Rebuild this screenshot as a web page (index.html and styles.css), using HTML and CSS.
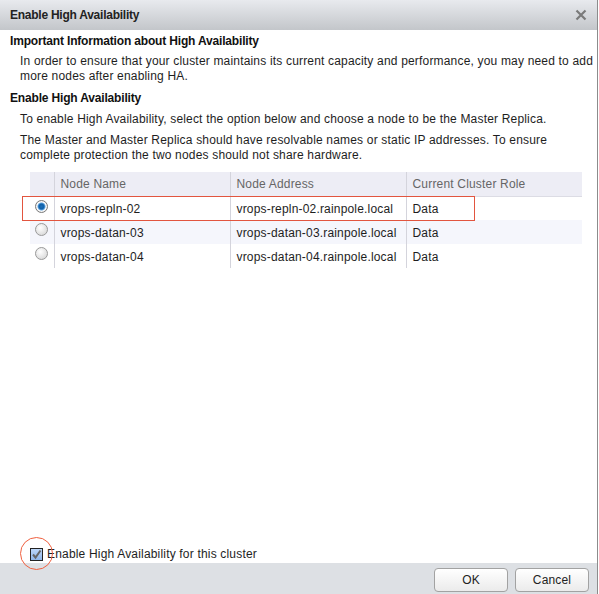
FILE: index.html
```html
<!DOCTYPE html>
<html>
<head>
<meta charset="utf-8">
<link rel="stylesheet" href="styles.css">
</head>
<body>
<div class="dialog">
  <div class="titlebar">
    <span class="title">Enable High Availability</span>
    <svg class="close" width="12" height="12" viewBox="0 0 12 12"><path d="M1.5 1.5 L10.5 10.5 M10.5 1.5 L1.5 10.5" stroke="#7a7a7a" stroke-width="2.2" fill="none"/></svg>
  </div>
  <div class="body">
    <h2 class="heading">Important Information about High Availability</h2>
    <p class="para">In order to ensure that your cluster maintains its current capacity and performance, you may need to add more nodes after enabling HA.</p>
    <h2 class="heading second">Enable High Availability</h2>
    <p class="para">To enable High Availability, select the option below and choose a node to be the Master Replica.</p>
    <p class="para">The Master and Master Replica should have resolvable names or static IP addresses. To ensure complete protection the two nodes should not share hardware.</p>
    <div class="tablewrap">
      <table class="grid">
        <thead>
          <tr><th class="sel"></th><th>Node Name</th><th>Node Address</th><th>Current Cluster Role</th></tr>
        </thead>
        <tbody>
          <tr><td class="sel"><span class="radio on"></span></td><td>vrops-repln-02</td><td>vrops-repln-02.rainpole.local</td><td>Data</td></tr>
          <tr class="alt"><td class="sel"><span class="radio"></span></td><td>vrops-datan-03</td><td>vrops-datan-03.rainpole.local</td><td>Data</td></tr>
          <tr><td class="sel"><span class="radio"></span></td><td>vrops-datan-04</td><td>vrops-datan-04.rainpole.local</td><td>Data</td></tr>
        </tbody>
      </table>
      <div class="highlight-box"></div>
    </div>
    <div class="spacer"></div>
    <label class="check">
      <span class="checkbox"><svg width="11" height="11" viewBox="0 0 11 11"><path d="M2 5.5 L4.5 8.5 L9.5 1.5" stroke="#666" stroke-width="2" fill="none"/></svg></span>
      <span>Enable High Availability for this cluster</span>
      <span class="highlight-circle"></span>
    </label>
  </div>
  <div class="footer">
    <button class="btn">OK</button>
    <button class="btn">Cancel</button>
  </div>
</div>
</body>
</html>
```
FILE: styles.css
```css
html, body {
  margin: 0;
  padding: 0;
  background: #fff;
}
body {
  font-family: "Liberation Sans", Arial, sans-serif;
  font-size: 12px;
  letter-spacing: 0.18px;
  color: #1e1e1e;
}
.dialog {
  width: 598px;
  height: 594px;
  border-right: 1px solid #8c8c8c;
  display: flex;
  flex-direction: column;
  box-sizing: border-box;
}
.titlebar {
  height: 30px;
  flex: none;
  background: linear-gradient(#e8eaee, #c3c6ca);
  display: flex;
  align-items: center;
  justify-content: space-between;
  padding: 0 10px 0 10px;
  box-sizing: border-box;
}
.title {
  font-weight: bold;
  font-size: 12px;
  color: #222;
  letter-spacing: -0.25px;
}
.body {
  flex: 1;
  display: flex;
  flex-direction: column;
  padding: 4px 0 0 10px;
}
.heading {
  font-size: 12px;
  font-weight: bold;
  margin: 0;
  line-height: 15px;
  color: #111;
  letter-spacing: -0.17px;
}
.heading.second {
  margin-top: 7px;
}
.para {
  margin: 5px 0 0 10px;
  line-height: 15px;
  padding-right: 2px;
}
.para + .para {
  margin-top: 6px;
}
.heading.second + .para {
  margin-top: 6px;
}
.tablewrap {
  position: relative;
  margin: 9px 0 0 20px;
  width: 552px;
}
.grid {
  border-collapse: collapse;
  width: 552px;
  table-layout: fixed;
}
.grid th {
  background: #ededf5;
  color: #666;
  font-weight: normal;
  text-align: left;
  height: 24px;
  padding: 1px 6px 0;
  border-left: 1px solid #d4d4dc;
  border-bottom: 1px solid #dcdce4;
  box-sizing: border-box;
}
.grid td {
  height: 24px;
  padding: 1px 6px 0;
  border-left: 1px solid #d4d4dc;
  box-sizing: border-box;
}
.grid th.sel, .grid td.sel {
  width: 24px;
  border-left: none;
  padding: 0;
  text-align: center;
}
.grid th:nth-child(2) { width: 176px; }
.grid th:nth-child(3) { width: 176px; }
.grid tr.alt td { background: #f5f6fc; }
.radio {
  display: inline-block;
  width: 11px;
  height: 11px;
  border-radius: 50%;
  border: 1px solid #9a9a9a;
  background: radial-gradient(circle at 40% 35%, #ffffff, #d0d0d0);
  vertical-align: middle;
  margin-top: -6px;
}
.radio.on {
  border-color: #7a7a7a;
  background: radial-gradient(circle at 50% 50%, #1d6fb8 0, #1060a8 2.5px, #5aa0dc 3.5px, #ffffff 4.5px, #e0e0e0 6px);
}
.highlight-box {
  position: absolute;
  left: -8px;
  top: 24px;
  width: 453px;
  height: 25px;
  border: 1px solid #e2553f;
  box-sizing: border-box;
}
.spacer {
  flex: 1;
}
.check {
  position: relative;
  display: flex;
  align-items: center;
  gap: 4px;
  margin: 0 0 1px 20px;
  height: 16px;
}
.checkbox {
  width: 11px;
  height: 11px;
  border: 1px solid #222;
  background: linear-gradient(#bcd6f8, #8fb6ea);
  display: flex;
  align-items: center;
  justify-content: center;
}
.highlight-circle {
  position: absolute;
  left: -10px;
  top: -9px;
  width: 31px;
  height: 31px;
  border: 1px solid #f0603f;
  border-radius: 50%;
}
.footer {
  height: 31px;
  flex: none;
  background: #dde0e4;
  display: flex;
  justify-content: flex-end;
  align-items: center;
  gap: 7px;
  padding: 2px 8px 0 0;
  box-sizing: border-box;
}
.btn {
  width: 74px;
  height: 24px;
  border: 1px solid #a2a2a2;
  border-radius: 4px;
  background: linear-gradient(#ffffff, #ebebeb);
  font-family: "Liberation Sans", Arial, sans-serif;
  font-size: 12px;
  letter-spacing: 0.18px;
  color: #222;
  padding: 0;
}
```
